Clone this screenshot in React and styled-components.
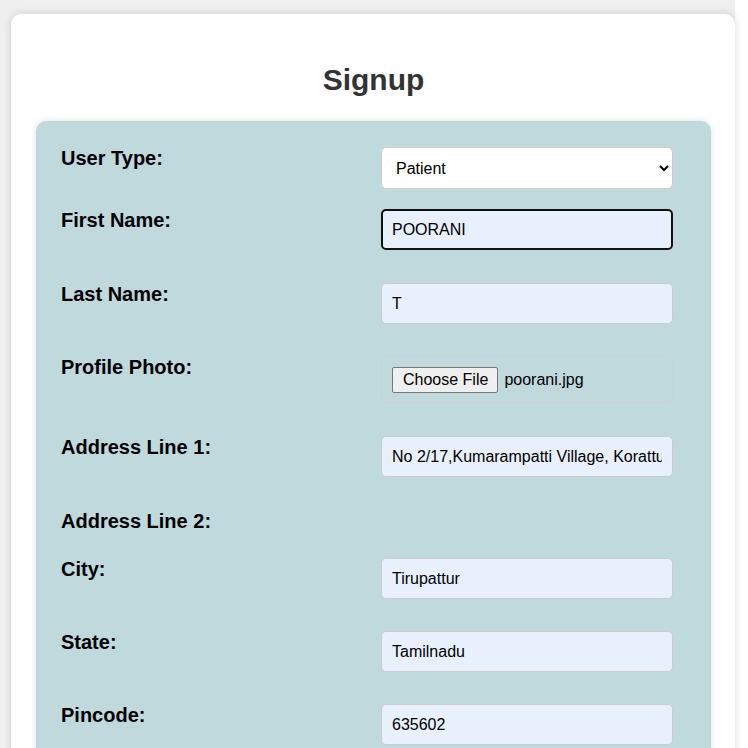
import React from "react";
import styled, { createGlobalStyle } from "styled-components";

const GlobalStyle = createGlobalStyle`
  html, body {
    margin: 0;
    padding: 0;
    background: #ffffff;
  }
  body {
    font-family: "Liberation Sans", Arial, sans-serif;
  }
`;

const Page = styled.div`
  width: 735px;
  min-height: 748px;
  background: #efefef;
  padding: 14px 0 0 11px;
  box-sizing: border-box;
`;

const Card = styled.div`
  background: #ffffff;
  border-radius: 10px;
  box-shadow: 0 0 8px rgba(0, 0, 0, 0.15);
  padding: 24px 24px 0 25px;
  min-height: 760px;
  box-sizing: border-box;
`;

const Title = styled.h2`
  margin: 25px 0 24px;
  text-align: center;
  font-size: 30px;
  font-weight: bold;
  color: #333333;
`;

const Panel = styled.form`
  background: #c0d9dd;
  border-radius: 10px;
  box-shadow: 0 0 6px rgba(0, 0, 0, 0.12);
  padding: 24px 25px 30px;
`;

const Row = styled.div`
  display: grid;
  grid-template-columns: 320px 292px;
  align-items: start;
  margin-bottom: ${({ $gap }) => $gap}px;
`;

const Label = styled.label`
  padding-top: 2px;
  font-size: 20px;
  line-height: 23px;
  font-weight: bold;
  color: #000000;
`;

const Input = styled.input`
  box-sizing: border-box;
  margin: 2px 0 0;
  width: 292px;
  height: 41px;
  padding: 0 ${({ $focused }) => ($focused ? 9 : 10)}px;
  border: ${({ $focused }) => ($focused ? "2px solid #111111" : "1px solid #cccccc")};
  border-radius: 5px;
  background: #e8f0fe;
  font-family: "Liberation Sans", Arial, sans-serif;
  font-size: 16px;
  color: #000000;
  outline: none;
`;

const Select = styled.select`
  box-sizing: border-box;
  margin: 2px 0 0;
  width: 292px;
  height: 42px;
  padding: 0 10px;
  border: 1px solid #cccccc;
  border-radius: 5px;
  background: #ffffff;
  font-family: "Liberation Sans", Arial, sans-serif;
  font-size: 16px;
  color: #000000;
`;

const FileBox = styled.div`
  box-sizing: border-box;
  margin: 2px 0 0;
  width: 292px;
  height: 47px;
  padding: 0 10px;
  border: 1px solid #c6d3d6;
  border-radius: 5px;
  display: flex;
  align-items: center;
  gap: 6px;
  font-family: "Liberation Sans", Arial, sans-serif;
  font-size: 16px;
  color: #000000;
`;

const FileButton = styled.span`
  box-sizing: border-box;
  height: 26px;
  padding: 0 9px 0 10px;
  display: inline-flex;
  align-items: center;
  background: #efefef;
  border: 1px solid #767676;
  border-radius: 2px;
  font-size: 16px;
`;

const fields = [
  { label: "First Name:", value: "POORANI", focused: true, gap: 31 },
  { label: "Last Name:", value: "T", gap: 30 },
];

const address = [
  { label: "City:", value: "Tirupattur" },
  { label: "State:", value: "Tamilnadu" },
  { label: "Pincode:", value: "635602" },
];

export default function App() {
  return (
    <>
      <GlobalStyle />
      <Page>
        <Card>
          <Title>Signup</Title>
          <Panel onSubmit={(e) => e.preventDefault()}>
            <Row $gap={18}>
              <Label>User Type:</Label>
              <Select defaultValue="patient">
                <option value="patient">Patient</option>
                <option value="doctor">Doctor</option>
              </Select>
            </Row>
            {fields.map((f) => (
              <Row key={f.label} $gap={f.gap}>
                <Label>{f.label}</Label>
                <Input defaultValue={f.value} $focused={f.focused} />
              </Row>
            ))}
            <Row $gap={31}>
              <Label>Profile Photo:</Label>
              <FileBox>
                <FileButton>Choose File</FileButton>
                <span>poorani.jpg</span>
              </FileBox>
            </Row>
            <Row $gap={31}>
              <Label>Address Line 1:</Label>
              <Input defaultValue="No 2/17,Kumarampatti Village, Korattur" />
            </Row>
            <Row $gap={23}>
              <Label>Address Line 2:</Label>
            </Row>
            {address.map((f) => (
              <Row key={f.label} $gap={30}>
                <Label>{f.label}</Label>
                <Input defaultValue={f.value} />
              </Row>
            ))}
          </Panel>
        </Card>
      </Page>
    </>
  );
}
